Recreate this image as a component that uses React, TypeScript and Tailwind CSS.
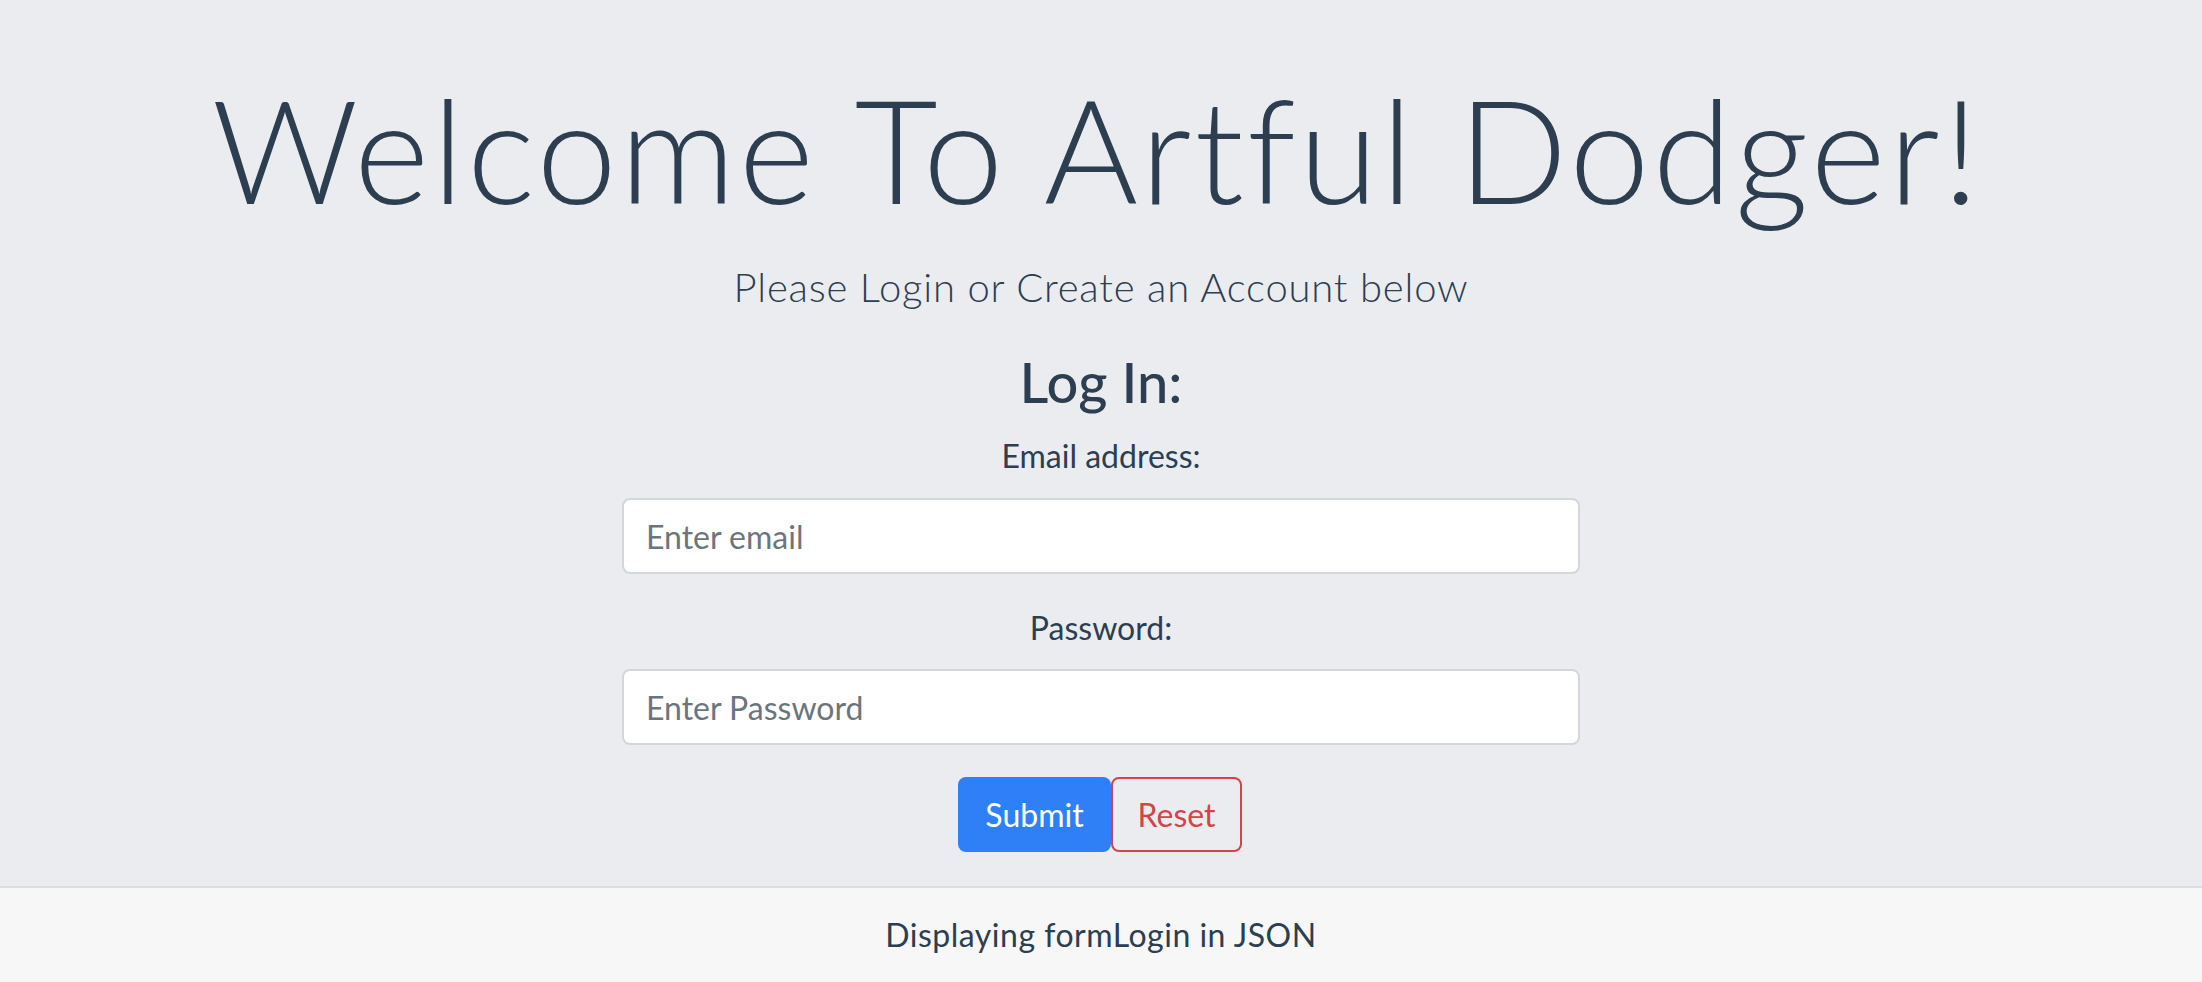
import { useState } from "react";

export default function App() {
  const [email, setEmail] = useState("");
  const [password, setPassword] = useState("");

  const reset = () => {
    setEmail("");
    setPassword("");
  };

  return (
    <div className="min-h-screen flex flex-col bg-[#ebecf0] text-[#2c3e50] font-['Lato','Noto_Sans',sans-serif]">
      <main className="h-[886px] flex flex-col items-center">
        <h1 className="mt-[77px] mr-[8px] text-[144px] leading-[144px] font-light tracking-[3px]">
          Welcome To Artful Dodger!
        </h1>
        <p className="mt-[42px] text-[40px] leading-[48px] font-light tracking-[0.8px]">
          Please Login or Create an Account below
        </p>
        <h3 className="mt-[39px] text-[56px] leading-[64px] font-medium">
          Log In:
        </h3>

        <form
          className="flex flex-col items-center"
          onSubmit={(e) => e.preventDefault()}
        >
          <label htmlFor="email" className="mt-[18px] text-[32px] leading-[48px]">
            Email address:
          </label>
          <input
            id="email"
            type="email"
            value={email}
            onChange={(e) => setEmail(e.target.value)}
            placeholder="Enter email"
            className="mt-[18px] w-[958px] h-[76px] px-[22px] bg-white border-2 border-[#d3d6da] rounded-[8px] text-[32px] text-[#495057] placeholder:text-[#6c757d] outline-none"
          />

          <label htmlFor="password" className="mt-[30px] text-[32px] leading-[48px]">
            Password:
          </label>
          <input
            id="password"
            type="password"
            value={password}
            onChange={(e) => setPassword(e.target.value)}
            placeholder="Enter Password"
            className="mt-[17px] w-[958px] h-[76px] px-[22px] bg-white border-2 border-[#d3d6da] rounded-[8px] text-[32px] text-[#495057] placeholder:text-[#6c757d] outline-none"
          />

          <div className="mt-[32px] mr-[2px] flex">
            <button
              type="submit"
              className="w-[153px] h-[75px] rounded-[8px] bg-[#2f7ff7] text-white text-[32px]"
            >
              Submit
            </button>
            <button
              type="button"
              onClick={reset}
              className="w-[131px] h-[75px] rounded-[8px] border-2 border-[#d3434a] text-[#d3434a] text-[32px]"
            >
              Reset
            </button>
          </div>
        </form>
      </main>

      <footer className="border-t-2 border-[#dcdde0] bg-[#f7f7f7] py-[23px] text-center text-[32px] leading-[48px] tracking-[0.5px]">
        Displaying formLogin in JSON
      </footer>
    </div>
  );
}
